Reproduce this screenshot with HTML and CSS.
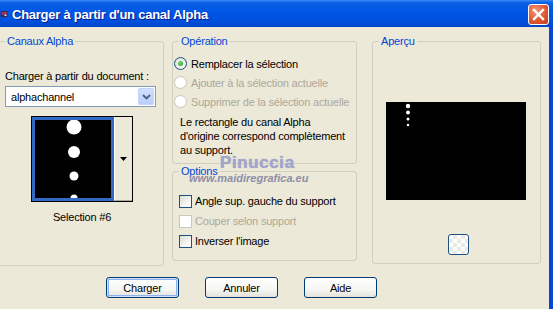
FILE: index.html
```html
<!DOCTYPE html>
<html>
    <head>
        <meta charset="UTF-8">
        <title>Charger à partir d'un canal Alpha</title>
        <link rel="stylesheet" href="styles.css">
    </head>
    <body>
        <div class="window">
            <div class="titlebar">
                <span class="app-icon">
                    <svg width="16" height="16" viewBox="0 0 16 16">
                        <rect x="1" y="2" width="14" height="12" rx="2" fill="#3b2a4e"/>
                        <rect x="3" y="4" width="6" height="6" fill="#8a2f8f"/>
                        <rect x="9" y="4" width="4" height="4" fill="#d23a3a"/>
                        <rect x="9" y="9" width="4" height="3" fill="#e9e2f0"/>
                    </svg>
                </span>
                <span class="title">Charger à partir d'un canal Alpha</span>
                <button class="close">
                    <svg width="13" height="13" viewBox="0 0 13 13">
                        <path d="M2 2 L11 11 M11 2 L2 11" stroke="#fff" stroke-width="2.4" stroke-linecap="square"/>
                    </svg>
                </button>
            </div>
            <div class="client">
                <div class="panes">
                    <fieldset class="group alpha">
                        <legend>Canaux Alpha</legend>
                        <div class="field-label">Charger à partir du document :</div>
                        <div class="combo">
                            <span class="combo-value">alphachannel</span>
                            <span class="combo-btn">
                                <svg width="9" height="6" viewBox="0 0 9 6">
                                    <path d="M1 1 L4.5 4.5 L8 1" fill="none" stroke="#4d6185" stroke-width="1.8"/>
                                </svg>
                            </span>
                        </div>
                        <div class="thumb">
                            <div class="thumb-img">
                                <svg width="76" height="78" viewBox="0 0 76 78">
                                    <circle cx="39" cy="7" r="7.5" fill="#fff"/>
                                    <circle cx="39" cy="32" r="6" fill="#fff"/>
                                    <circle cx="39" cy="56" r="4.5" fill="#fff"/>
                                    <circle cx="39" cy="78" r="3.5" fill="#fff"/>
                                </svg>
                            </div>
                            <div class="thumb-drop">
                                <svg width="7" height="4" viewBox="0 0 7 4">
                                    <path d="M0 0 H7 L3.5 4 Z" fill="#000"/>
                                </svg>
                            </div>
                        </div>
                        <div class="caption">Selection #6</div>
                    </fieldset>

                    <div class="middle">
                        <fieldset class="group operation">
                            <legend>Opération</legend>
                            <div class="choice">
                                <span class="radio checked"></span>
                                <span>Remplacer la sélection</span>
                            </div>
                            <div class="choice disabled">
                                <span class="radio"></span>
                                <span>Ajouter à la sélection actuelle</span>
                            </div>
                            <div class="choice disabled">
                                <span class="radio"></span>
                                <span>Supprimer de la sélection actuelle</span>
                            </div>
                            <p class="note">Le rectangle du canal Alpha<br>d'origine correspond complètement<br>au support.</p>
                        </fieldset>

                        <fieldset class="group options">
                            <legend>Options</legend>
                            <div class="check-row">
                                <span class="checkbox"></span>
                                <span>Angle sup. gauche du support</span>
                            </div>
                            <div class="check-row disabled">
                                <span class="checkbox"></span>
                                <span>Couper selon support</span>
                            </div>
                            <div class="check-row">
                                <span class="checkbox"></span>
                                <span>Inverser l'image</span>
                            </div>
                        </fieldset>
                    </div>

                    <fieldset class="group preview">
                        <legend>Aperçu</legend>
                        <div class="preview-img">
                            <svg width="140" height="98" viewBox="0 0 140 98">
                                <circle cx="22" cy="4" r="2.2" fill="#fff"/>
                                <circle cx="22" cy="10.5" r="2" fill="#fff"/>
                                <circle cx="22" cy="17" r="1.5" fill="#fff"/>
                                <circle cx="22" cy="23" r="1.2" fill="#fff"/>
                            </svg>
                        </div>
                        <button class="bg-btn"></button>
                    </fieldset>
                </div>

                <div class="actions">
                    <button class="btn default">Charger</button>
                    <button class="btn">Annuler</button>
                    <button class="btn">Aide</button>
                </div>

                <!-- filigrane -->
                <div class="watermark">
                    <span class="wm-name">Pinuccia</span>
                    <span class="wm-url">www.maidiregrafica.eu</span>
                </div>
            </div>
        </div>
    </body>
</html>
```

FILE: styles.css
```css
body{
    margin: 0;
    background: #ece9d8;
    overflow: hidden;
    font-family: "Liberation Sans", Arial, sans-serif;
    font-size: 11px;
    letter-spacing: -0.2px;
    color: #000;
}

.window{
    width: 553px;
    height: 309px;
    overflow: hidden;
}

/* title bar */

.titlebar{
    height: 27px;
    display: flex;
    align-items: center;
    background: linear-gradient(#3d8af7 0%, #0a5fe6 10%, #0055e5 45%, #0050dc 80%, #0045c8 100%);
}

.app-icon{
    width: 8px;
    height: 16px;
    overflow: hidden;
    display: flex;
    justify-content: flex-end;
    margin-top: 1px;
}

.title{
    margin-left: 4px;
    padding-top: 1px;
    color: #fff;
    font-size: 13px;
    font-weight: bold;
    letter-spacing: -0.25px;
    text-shadow: 1px 1px 0 #0a1e8c;
}

.close{
    margin-left: auto;
    margin-right: 4px;
    margin-top: 1px;
    width: 21px;
    height: 21px;
    padding: 0;
    border: 1px solid #fff;
    border-radius: 3px;
    background: radial-gradient(circle at 35% 30%, #f29a7c 0%, #e4603d 45%, #c73a18 100%);
    display: flex;
    align-items: center;
    justify-content: center;
}

/* client area */

.client{
    position: relative;
    height: 282px;
    padding-top: 8px;
    box-sizing: border-box;
    border-right: 4px solid #0846d8;
}

.panes{
    display: flex;
    gap: 8px;
    align-items: flex-start;
}

.group{
    margin: 0;
    padding: 0;
    border: 1px solid #d0d0bf;
    border-radius: 3px;
    box-sizing: border-box;
    min-width: 0;
}

.group legend{
    margin-left: 6px;
    padding: 0 2px;
    line-height: 13px;
    color: #0046d5;
}

.alpha{
    margin-left: -2px;
    width: 166px;
    height: 231px;
    padding: 0 0 0 6px;
}

.alpha legend{
    margin-left: 0;
}

.field-label{
    margin-top: 22px;
    line-height: 13px;
}

.combo{
    margin-top: 3px;
    width: 151px;
    height: 21px;
    box-sizing: border-box;
    border: 1px solid #7f9db9;
    background: #fff;
    display: flex;
    align-items: center;
}

.combo-value{
    padding-left: 5px;
    flex: 1;
}

.combo-btn{
    width: 16px;
    height: 17px;
    margin-right: 1px;
    border-radius: 2px;
    background: linear-gradient(#d4e1fd, #b7cdf9);
    box-shadow: inset 0 0 0 1px #c3d3fd;
    display: flex;
    align-items: center;
    justify-content: center;
}

.thumb{
    margin-top: 9px;
    margin-left: 26px;
    width: 102px;
    height: 86px;
    box-sizing: border-box;
    border: 1px solid #000;
    display: flex;
}

.thumb-img{
    width: 82px;
    border: 3px solid #316ac5;
    background: #000;
    box-sizing: border-box;
    overflow: hidden;
}

.thumb-img svg{
    display: block;
}

.thumb-drop{
    flex: 1;
    border-left: 1px solid #fff;
    border-bottom: 1px solid #aca899;
    display: flex;
    align-items: center;
    justify-content: center;
}

.caption{
    margin-top: 9px;
    margin-left: 26px;
    width: 102px;
    text-align: center;
    line-height: 13px;
}

.middle{
    display: flex;
    flex-direction: column;
    gap: 1px;
    width: 185px;
}

.operation{
    height: 129px;
}

.choice{
    height: 19px;
    display: flex;
    align-items: center;
    gap: 4px;
    padding-left: 1px;
}

.choice:first-of-type{
    margin-top: 6px;
}

.radio{
    width: 13px;
    height: 13px;
    box-sizing: border-box;
    border: 1px solid #1c5180;
    border-radius: 50%;
    background: radial-gradient(circle at 70% 70%, #fff 0%, #f1f1ef 40%, #d8d6ce 100%);
    display: flex;
    align-items: center;
    justify-content: center;
}

.radio.checked::after{
    content: "";
    width: 5px;
    height: 5px;
    border-radius: 50%;
    background: radial-gradient(circle at 35% 35%, #6ede6e, #21a121);
}

.disabled{
    color: #aca899;
}

.disabled .radio, .disabled .checkbox{
    border-color: #cac8bb;
    background: #fff;
}

.note{
    margin: 4px 0 0 7px;
    line-height: 14px;
}

.options{
    height: 96px;
}

.check-row{
    height: 20px;
    display: flex;
    align-items: center;
    gap: 3px;
    padding-left: 6px;
}

.check-row:first-of-type{
    margin-top: 13px;
}

.checkbox{
    width: 13px;
    height: 13px;
    box-sizing: border-box;
    border: 1px solid #1c5180;
    background: linear-gradient(135deg, #dcdcd7 0%, #f4f4f0 60%, #fff 100%);
}

.preview{
    margin-left: 7px;
    width: 169px;
    height: 229px;
}

.preview-img{
    margin-top: 54px;
    margin-left: 13px;
    width: 140px;
    height: 98px;
    background: #000;
}

.preview-img svg{
    display: block;
}

.bg-btn{
    display: block;
    margin-top: 34px;
    margin-left: 75px;
    width: 21px;
    height: 21px;
    padding: 0;
    border: 1px solid #1c5180;
    border-radius: 3px;
    background-color: #fff;
    background-image: conic-gradient(#e8e8e4 25%, #fff 0 50%, #e8e8e4 0 75%, #fff 0);
    background-size: 8px 8px;
    box-shadow: inset 0 0 2px #fff;
}

/* buttons */

.actions{
    display: flex;
    gap: 26px;
    margin-top: 11px;
    padding-left: 106px;
}

.btn{
    width: 73px;
    height: 21px;
    padding: 0;
    border: 1px solid #003c74;
    border-radius: 3px;
    background: linear-gradient(#ffffff 0%, #f6f6f3 60%, #e3e2da 100%);
    font-family: "Liberation Sans", Arial, sans-serif;
    font-size: 11px;
    letter-spacing: -0.2px;
    color: #000;
}

.btn.default{
    box-shadow: inset 0 0 0 1px #cee0fb, inset 0 0 0 2px #8eb1ef;
}

/* watermark over the options box */

.watermark{
    position: absolute;
    left: 189px;
    top: 127px;
    display: flex;
    flex-direction: column;
    align-items: flex-start;
    pointer-events: none;
}

.wm-name{
    margin-left: 31px;
    font-size: 17px;
    line-height: 18px;
    font-weight: bold;
    letter-spacing: 0.6px;
    color: #a3a6cc;
    text-shadow: 0 0 1px #8e92bd;
}

.wm-url{
    font-size: 11px;
    line-height: 12px;
    font-weight: bold;
    font-style: italic;
    letter-spacing: 0;
    color: #8e8ea8;
}
```
